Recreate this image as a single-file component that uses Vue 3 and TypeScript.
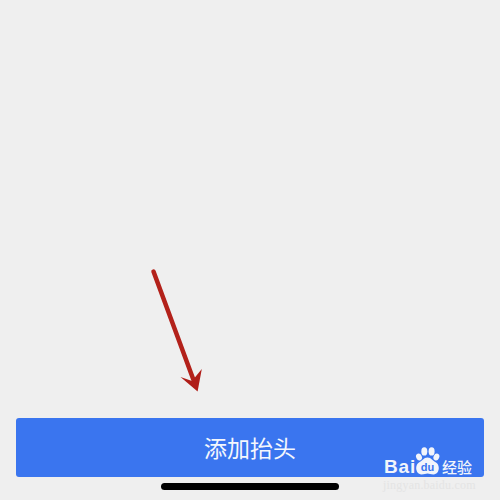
<script setup lang="ts">
const label = "添加抬头";
</script>

<template>
  <div class="page">
    <div class="content">
      <svg class="arrow" width="100" height="150" viewBox="130 255 100 150">
        <line x1="153.5" y1="271.5" x2="195" y2="384" stroke="#b3211a" stroke-width="4.5" stroke-linecap="round" />
        <path d="M180.5 377 L192 381 L201.8 369 L197.6 391.5 Z" fill="#b01d18" />
      </svg>
    </div>
    <div class="action">
      <button class="primary">{{ label }}</button>
      <div class="mark">
        <span class="bai">Bai</span>
        <svg class="paw" width="25" height="28" viewBox="0 0 25 28">
          <ellipse cx="4" cy="10" rx="2.8" ry="3.6" fill="#f2f5fb" transform="rotate(-25 4 10)" />
          <ellipse cx="9.3" cy="4.4" rx="3" ry="4.2" fill="#f2f5fb" />
          <ellipse cx="16.6" cy="4.4" rx="3" ry="4.2" fill="#f2f5fb" />
          <ellipse cx="21.4" cy="10" rx="2.8" ry="3.6" fill="#f2f5fb" transform="rotate(25 21.4 10)" />
          <path d="M12.5 10.5 C16.5 10.5 17.5 14 21 15.5 C25.5 18 24.5 27.5 18.5 27.5 C15.5 27.5 14.5 26.6 12.5 26.6 C10.5 26.6 9.5 27.5 6.5 27.5 C0.5 27.5 -0.5 18 4 15.5 C7.5 14 8.5 10.5 12.5 10.5 Z" fill="#f2f5fb" />
          <text x="12.5" y="24" text-anchor="middle" class="du">du</text>
        </svg>
        <span class="jy">经验</span>
      </div>
    </div>
    <div class="foot">
      <div class="home"></div>
      <span class="site">jingyan.baidu.com</span>
    </div>
  </div>
</template>

<style scoped>
.page {
  width: 500px;
  height: 500px;
  background: #efefef;
  display: flex;
  flex-direction: column;
  overflow: hidden;
  position: relative;
  font-family: "Noto Sans CJK SC", "Liberation Sans", sans-serif;
}
.content {
  flex: 1;
}
.arrow {
  position: absolute;
  left: 130px;
  top: 255px;
}
.action {
  margin: 0 16px;
  height: 59px;
  flex: none;
  position: relative;
}
.primary {
  width: 100%;
  height: 100%;
  border: none;
  border-radius: 3px;
  background: #3a75ef;
  color: #f4f7fd;
  font-family: inherit;
  font-size: 23px;
  font-weight: 400;
  padding: 0 0 2px;
  letter-spacing: 0;
}
.mark {
  position: absolute;
  left: 368px;
  top: 29px;
  display: flex;
  align-items: flex-end;
  height: 30px;
  color: #f2f5fb;
}
.bai {
  font-family: "Liberation Sans", sans-serif;
  font-weight: 700;
  font-size: 19px;
  line-height: 20px;
  width: 31px;
  letter-spacing: 0.8px;
}
.paw {
  margin-bottom: 2px;
}
.du {
  font-family: "Liberation Sans", sans-serif;
  font-size: 11px;
  font-weight: 700;
  fill: #3a75ef;
}
.jy {
  font-size: 15px;
  line-height: 20px;
  font-weight: 500;
  margin-left: 2px;
}
.foot {
  height: 23px;
  flex: none;
  position: relative;
  display: flex;
  justify-content: center;
  padding-top: 6px;
  box-sizing: border-box;
}
.home {
  width: 178px;
  height: 7px;
  border-radius: 4px;
  background: #000;
}
.site {
  position: absolute;
  left: 383px;
  top: 1px;
  font-family: "Liberation Serif", serif;
  font-size: 12px;
  color: #e4e4e4;
  letter-spacing: 0.2px;
}
</style>
